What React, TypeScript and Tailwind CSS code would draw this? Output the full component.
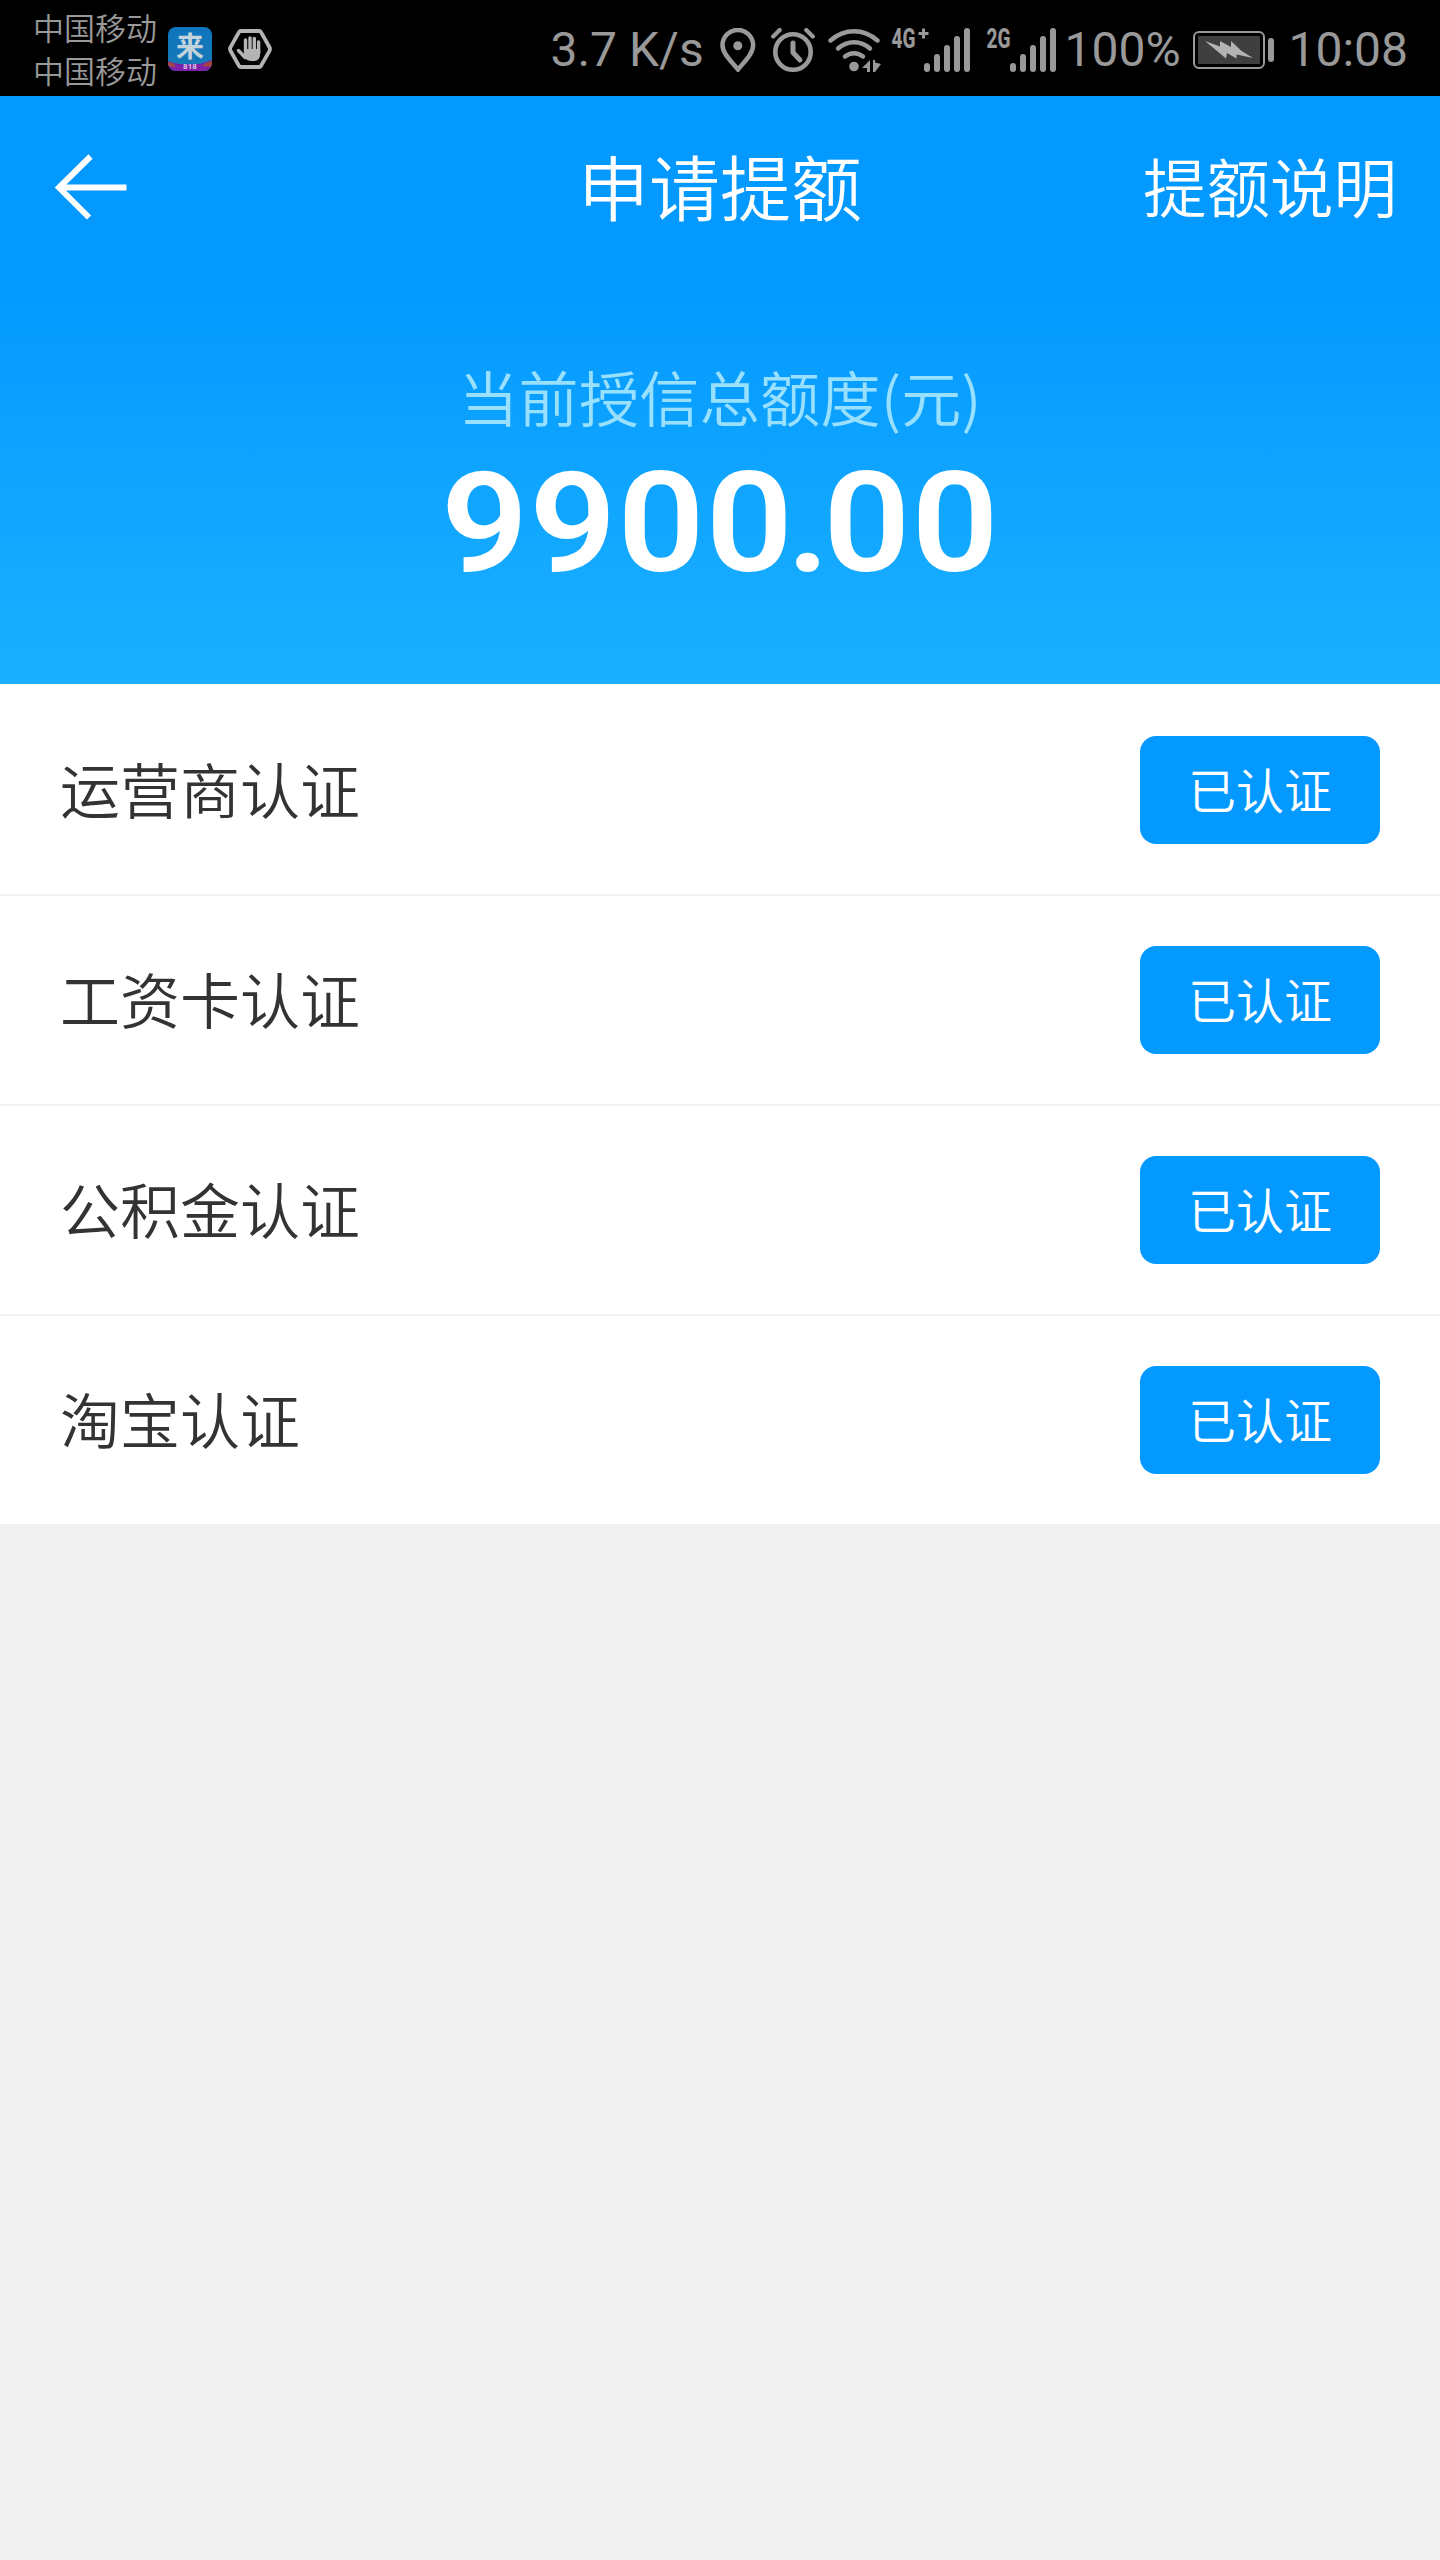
interface Certification {
    id: number;
    name: string;
    status: string;
}

const certifications: Certification[] = [
    { id: 1, name: '运营商认证', status: '已认证' },
    { id: 2, name: '工资卡认证', status: '已认证' },
    { id: 3, name: '公积金认证', status: '已认证' },
    { id: 4, name: '淘宝认证', status: '已认证' },
];

function AppBadge() {
    return (
        <svg width="44" height="44" viewBox="0 0 44 44" className="ml-3 mt-px shrink-0 overflow-visible">
            <defs>
                <clipPath id="badge">
                    <rect width="44" height="44" rx="8" />
                </clipPath>
                <linearGradient id="badgeBg" x1="0" y1="0" x2="0" y2="1">
                    <stop offset="0" stopColor="#0e76bd" />
                    <stop offset="1" stopColor="#1779b5" />
                </linearGradient>
            </defs>
            <g clipPath="url(#badge)">
                <rect width="44" height="44" fill="url(#badgeBg)" />
                <path d="M0 34l6 2 6 1h20l6-2 6-2v11H0z" fill="#7d22a8" />
                <path d="M0 35l5 1 3 4-8-1zM44 34l-6 2-4 3 10 1z" fill="#a3473f" />
            </g>
            <text x="22" y="29.500" textAnchor="middle" fill="#c3d3dc" fontSize="28" fontWeight="700" fontFamily="Noto Sans CJK SC, sans-serif">来</text>
            <text x="22" y="42.300" textAnchor="middle" fill="#d8c8e0" fontSize="8" fontWeight="700" fontFamily="Roboto, sans-serif">818</text>
        </svg>
    );
}

function HandIcon() {
    return (
        <svg width="44" height="40" viewBox="0 0 44 40" className="ml-4 mt-0.5 shrink-0">
            <path d="M13 2h18q1.400 0 2 1.200l8.500 15q1 1.800 0 3.600l-8.500 15q-.6 1.200-2 1.200H13q-1.400 0-2-1.200l-8.500-15q-1-1.800 0-3.600l8.500-15Q11.600 2 13 2z" fill="none" stroke="#b4b4b4" strokeWidth="3.800" />
            <path d="M10.500 21.500l6.500 7M17.500 24V11M22 23V9M26.300 23V9.500M30.600 24V13" fill="none" stroke="#b4b4b4" strokeWidth="3.400" strokeLinecap="round" />
            <path d="M16 20h16.200v4.500q0 7.500-6.500 7.500h-3.500q-3 0-5.200-3z" fill="#b4b4b4" />
        </svg>
    );
}

function PinIcon() {
    return (
        <svg width="36" height="44" viewBox="0 0 36 44" className="shrink-0">
            <path d="M18 41.500C12 34 2.500 26 2.500 17.200a15.300 15.300 0 0 1 30.600 0C33.100 26 24 34 18 41.500z" fill="none" stroke="#999" strokeWidth="4.500" />
            <circle cx="17.800" cy="17.800" r="4.500" fill="#999" />
        </svg>
    );
}

function AlarmIcon() {
    return (
        <svg width="44" height="44" viewBox="0 0 44 44" className="ml-[15px] shrink-0" fill="none" stroke="#999" strokeWidth="4.600">
            <circle cx="22" cy="24" r="17.700" />
            <path d="M22 15v9.500l7 7.500" strokeWidth="5" strokeLinecap="round" strokeLinejoin="round" />
            <path d="M2.200 8.500L8.700 2M35.300 2L41.800 8.500" strokeWidth="4.200" strokeLinecap="round" />
        </svg>
    );
}

function WifiIcon() {
    return (
        <svg width="54" height="44" viewBox="0 0 54 44" className="ml-[13px] shrink-0">
            <g fill="none" stroke="#999" strokeWidth="4.400" strokeLinecap="round">
                <path d="M2.500 12.500Q13 3.200 26 3.200t23.500 9.300" />
                <path d="M10 20.500Q17 14.200 26 14.200t16 6.300" />
                <path d="M17 28.500Q21 25.200 26 25.200t9 3.300" />
            </g>
            <circle cx="26" cy="38.500" r="4.800" fill="#999" />
            <path d="M42 32v12h-3v-4h-5zM45 32h2v2.500L53 36l-6 8h-2z" fill="#999" />
        </svg>
    );
}

interface SignalProps {
    label: string;
    labelWidth: number;
    plus?: boolean;
    offset: number;
}

function Signal({ label, labelWidth, plus, offset }: SignalProps) {
    const bars = [9, 18, 27, 36, 44];

    return (
        <svg width={offset + 46} height="44" viewBox={`0 0 ${offset + 46} 44`} className="shrink-0 overflow-visible" fill="#999">
            <text x="-.5" y="19.800" fontSize="27" fontWeight="800" fontFamily="Roboto, sans-serif" textLength={labelWidth} lengthAdjust="spacingAndGlyphs">{label}</text>
            {plus && <path d="M30 .5h3v3.500h3.500v3H33v3.500h-3V7h-3.500V4H30z" />}
            {bars.map((h, i) => (
                <rect key={h} x={offset + i * 10} y={44 - h} width="6" height={h} rx="3" />
            ))}
        </svg>
    );
}

function BatteryIcon() {
    return (
        <svg width="82" height="38" viewBox="0 0 82 38" className="shrink-0">
            <rect x="1" y="1" width="70" height="36" rx="5" fill="none" stroke="#999" strokeWidth="2" />
            <rect x="5" y="5" width="62" height="28" rx="1" fill="#3f3f3f" />
            <rect x="75" y="7" width="6" height="24" rx="3" fill="#999" />
            <path d="M12 10l15 5.500V10l11 6v-6l10 9.500L60 27l-16.500-3.500v4L34 22l-1 5.500z" fill="#b3b3b3" />
        </svg>
    );
}

function StatusBar() {
    return (
        <div className="flex h-24 items-center justify-between bg-black pl-[33px] pr-8 font-[Roboto] text-[48px] leading-none text-[#999]">
            <div className="flex items-center">
                <div className="flex w-[123px] shrink-0 flex-col pb-px font-['Noto_Sans_CJK_SC',sans-serif] text-[31px] font-[350] leading-[43px]">
                    <span className="whitespace-nowrap">中国移动</span>
                    <span className="whitespace-nowrap">中国移动</span>
                </div>
                <AppBadge />
                <HandIcon />
            </div>
            <div className="flex items-center pt-[3px]">
                <span className="w-[170px] whitespace-nowrap">3.7 K/s</span>
                <PinIcon />
                <AlarmIcon />
                <WifiIcon />
                <div className="ml-2.5 flex gap-[17px]">
                    <Signal label="4G" labelWidth={24} plus offset={32} />
                    <Signal label="2G" labelWidth={24} offset={23} />
                </div>
                <span className="ml-2 w-[129px] whitespace-nowrap">100%</span>
                <BatteryIcon />
                <span className="ml-[13px] whitespace-nowrap">10:08</span>
            </div>
        </div>
    );
}

function NavBar() {
    return (
        <div className="grid h-[184px] grid-cols-[1fr_auto_1fr] items-center bg-[#0499ff] px-[43px] font-[350]">
            <svg width="74" height="68" viewBox="0 0 74 68" fill="none" stroke="#fff" strokeWidth="6" className="ml-[11px]">
                <path d="M36.500 2.500L5 33.500l30 30M5 33.500h67.500" />
            </svg>
            <h1 className="pb-2 text-[71px] leading-none">申请提额</h1>
            <span className="justify-self-end pb-1.5 text-[63.5px] leading-none">提额说明</span>
        </div>
    );
}

export default function App() {
    return (
        <div className="min-h-[2560px] w-[1440px] bg-[#f1f1f1] font-['Noto_Sans_CJK_SC',sans-serif]">
            <StatusBar />
            <header className="h-[588px] text-white">
                <NavBar />
                <div className="flex h-[404px] flex-col items-center bg-linear-to-b from-[#0499ff] to-[#1ab0ff] pt-[84px]">
                    <p className="text-[60px] font-[350] leading-[64px] tracking-[0.4px] text-[#99e0ff]">当前授信总额度(元)</p>
                    <p className="mt-[15px] scale-x-[1.09] font-[Roboto] text-[140px] font-semibold leading-[160px] tracking-[1px]">
                        990<span className="tracking-[-6px]">0</span>
                        <span className="tracking-[-6px]">.</span>00
                    </p>
                </div>
            </header>
            <ul className="bg-white pt-0.5">
                {certifications.map((item) => (
                    <li key={item.id} className="flex h-[210px] items-center justify-between border-b-2 border-[#f3f3f3] px-[60px] last:border-[#f1f1f1]">
                        <span className="pb-1 text-[60px] font-[350] leading-none text-[#333]">{item.name}</span>
                        <button className="h-[108px] w-60 rounded-2xl bg-[#0499ff] pb-1 text-[48px] font-[350] leading-none text-white">
                            {item.status}
                        </button>
                    </li>
                ))}
            </ul>
        </div>
    );
}
